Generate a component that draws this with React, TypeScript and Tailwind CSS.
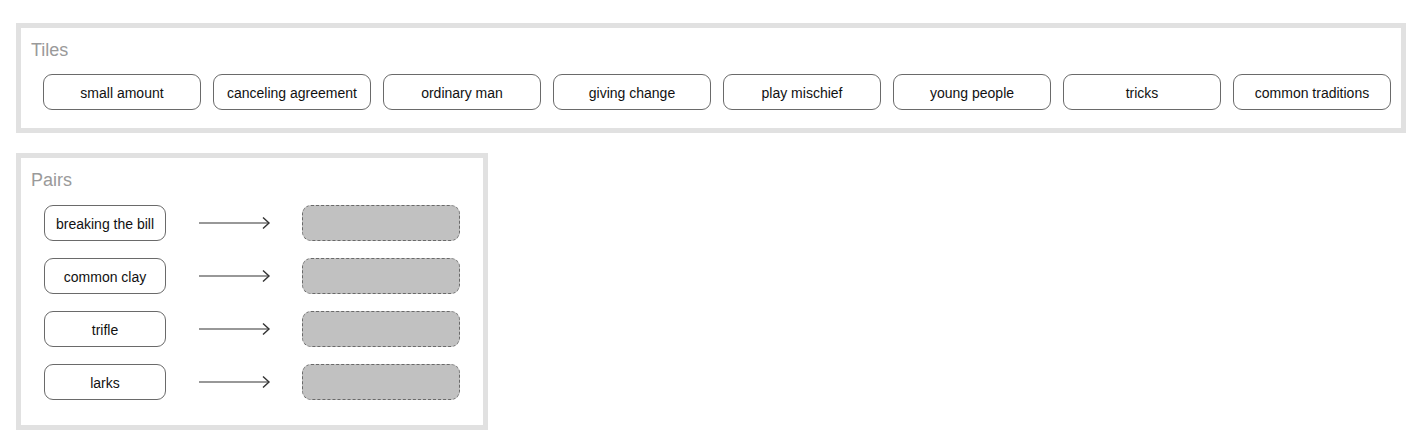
import React from 'react';

const tiles = [
  'small amount',
  'canceling agreement',
  'ordinary man',
  'giving change',
  'play mischief',
  'young people',
  'tricks',
  'common traditions',
];

const pairs = ['breaking the bill', 'common clay', 'trifle', 'larks'];

function Arrow() {
  return (
    <svg width="72" height="14" viewBox="0 0 72 14" className="shrink-0">
      <line x1="0" y1="7" x2="70" y2="7" stroke="#333" strokeWidth="1.2" />
      <polyline points="64,1.5 70,7 64,12.5" fill="none" stroke="#333" strokeWidth="1.4" />
    </svg>
  );
}

export default function App() {
  return (
    <div className="min-h-[437px] bg-white pt-[23px] pl-4 font-['Liberation_Sans',Arial,sans-serif] text-[14px] text-[#111]">
      {/* Tiles panel */}
      <div className="w-[1390px] border-[5px] border-[#e1e1e1] pt-[12px] pb-[18px] pl-[10px]">
        <div className="text-[18px] leading-[21px] text-[#9a9a9a]">Tiles</div>
        <div className="mt-[13px] ml-3 flex gap-3">
          {tiles.map((t) => (
            <div
              key={t}
              className="flex h-9 w-[158px] shrink-0 items-center justify-center rounded-[9px] border border-[#6a6a6a] pt-[2px] leading-none"
            >
              {t}
            </div>
          ))}
        </div>
      </div>

      {/* Pairs panel */}
      <div className="mt-5 w-[472px] border-[5px] border-[#e1e1e1] pt-[12px] pb-[25px] pl-[10px]">
        <div className="text-[18px] leading-[21px] text-[#9a9a9a]">Pairs</div>
        <div className="mt-[14px] ml-[13px] flex flex-col gap-[17px]">
          {pairs.map((p) => (
            <div key={p} className="flex items-center">
              <div className="flex h-9 w-[122px] shrink-0 items-center justify-center rounded-[9px] border border-[#6a6a6a] pt-[2px] leading-none">
                {p}
              </div>
              <div className="ml-[33px] mr-[31px]">
                <Arrow />
              </div>
              <div className="h-9 w-[158px] shrink-0 rounded-[9px] border border-dashed border-[#6a6a6a] bg-[#c1c1c1]" />
            </div>
          ))}
        </div>
      </div>
    </div>
  );
}
